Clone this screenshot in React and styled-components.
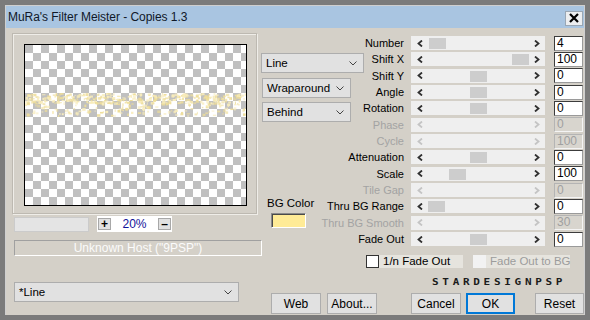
import styled, { createGlobalStyle } from 'styled-components';

const GlobalStyle = createGlobalStyle`
	html, body {
		margin: 0;
		padding: 0;
		background: #7b7b7b;
		width: 590px;
		height: 320px;
		overflow: hidden;
	}
	* {
		box-sizing: border-box;
	}
`;

const Window = styled.div`
	margin: 5px;
	width: 580px;
	height: 310px;
	border: 1px solid #cfcfcf;
	border-bottom: none;
	background: #d4d0c8;
	display: flex;
	flex-direction: column;
	font-family: 'Liberation Sans', Arial, sans-serif;
	font-size: 11px;
	color: #000;
	white-space: nowrap;
`;

const TitleBar = styled.div`
	height: 22px;
	background: #a9c5e1;
	display: flex;
	align-items: center;
	justify-content: space-between;
	padding: 0 1px 0 2px;
`;

const Title = styled.span`
	font-size: 12px;
	letter-spacing: -0.05px;
	color: #101828;
`;

const CloseButton = styled.div`
	width: 18px;
	height: 15px;
	margin-top: 2px;
	background: #eceef0;
	border: 1px solid #9aa7b4;
	display: flex;
	align-items: center;
	justify-content: center;
`;

const Body = styled.div`
	flex: 1;
	display: flex;
	padding-left: 6px;
`;

const LeftCol = styled.div`
	width: 249px;
	display: flex;
	flex-direction: column;
`;

const GroupBox = styled.div`
	margin-top: 5px;
	width: 245px;
	height: 181px;
	border: 1px solid #bdb9b1;
	box-shadow: inset 1px 1px 0 #efede8, 1px 1px 0 #efede8;
	padding: 10px 0 0 11px;
`;

const Preview = styled.div`
	width: 223px;
	height: 162px;
	border: 1px solid #000;
	background-color: #fff;
	background-image: repeating-conic-gradient(#fff 0 25%, #c0c0c0 0 50%);
	background-size: 16px 16px;
	display: flex;
	flex-direction: column;
`;

const Sparkles = styled.svg`
	margin-top: 47px;
	display: block;
`;

const ZoomRow = styled.div`
	margin: 2px 0 0 2px;
	display: flex;
	align-items: center;
	gap: 8px;
`;

const BlankField = styled.div`
	width: 75px;
	height: 15px;
	background: #e4e4e4;
	border: 1px solid #cbcbcb;
`;

const ZoomPanel = styled.div`
	width: 75px;
	height: 16px;
	background: #fff;
	display: flex;
	align-items: center;
	justify-content: space-between;
	padding: 0 1px;
`;

const ZoomButton = styled.div`
	width: 13px;
	height: 12px;
	background: #e1e1e1;
	border: 1px solid #a8a8a8;
	display: flex;
	align-items: center;
	justify-content: center;
	font-size: 12px;
	font-weight: bold;
	line-height: 1;
`;

const ZoomValue = styled.span`
	color: #12129a;
	font-size: 12px;
`;

const HostField = styled.div`
	margin: 8px 0 0 2px;
	width: 248px;
	height: 16px;
	border: 1px solid;
	border-color: #a0a0a0 #fff #fff #a0a0a0;
	color: #fbfbfb;
	font-size: 12px;
	text-align: center;
	line-height: 14px;
`;

const Combo = styled.div`
	margin: ${({ $mt }) => $mt || 0}px 0 0 ${({ $ml }) => $ml || 0}px;
	width: ${({ $w }) => $w}px;
	height: 20px;
	background: #e1e1e1;
	border: 1px solid #adadad;
	display: flex;
	align-items: center;
	justify-content: space-between;
	padding: 0 6px 0 4px;
	font-size: 11.5px;
	flex-shrink: 0;
`;

const RightCol = styled.div`
	width: 324px;
	display: flex;
	flex-direction: column;
`;

const SliderPanel = styled.div`
	margin-top: 7px;
	display: grid;
`;

const MidCol = styled.div`
	grid-area: 1 / 1;
	width: 110px;
	display: flex;
	flex-direction: column;
	align-items: flex-start;
`;

const BgLabel = styled.div`
	margin: 75px 0 0 6px;
	font-size: 11.5px;
`;

const Swatch = styled.div`
	margin: 4px 0 0 10px;
	width: 35px;
	height: 15px;
	background: #ffeb96;
	border: 1px solid;
	border-color: #8a8a8a #fff #fff #8a8a8a;
	box-shadow: inset 1px 1px 0 #4a4a4a;
`;

const SliderList = styled.div`
	grid-area: 1 / 1;
	display: flex;
	flex-direction: column;
`;

const SliderRow = styled.div`
	height: 16.33px;
	display: grid;
	grid-template-columns: 143px 134px 30px;
	column-gap: 7px;
	align-items: center;

	& > :last-child {
		margin-left: 2px;
	}
`;

const Label = styled.span`
	justify-self: end;
	font-size: 11px;
	color: ${({ $off }) => ($off ? '#a3a3a3' : '#000')};
`;

const Track = styled.div`
	position: relative;
	height: 14px;
	background: #efefef;
	display: flex;
	align-items: center;
	justify-content: space-between;
	padding: 0 5px 0 6px;
`;

const Thumb = styled.div`
	position: absolute;
	top: 2px;
	width: 17px;
	height: 11px;
	background: #cdcdcd;
`;

const ValueBox = styled.div`
	width: 29px;
	height: 15px;
	border: 1px solid;
	border-color: ${({ $off }) =>
		$off ? '#b4b4b4 #f4f4f4 #f4f4f4 #b4b4b4' : '#3c3c3c #9a9a9a #9a9a9a #3c3c3c'};
	background: ${({ $off }) => ($off ? '#d8d5ce' : '#fff')};
	color: ${({ $off }) => ($off ? '#a0a0a0' : '#000')};
	font-size: 12px;
	line-height: 13px;
	padding-left: 2px;
`;

const CheckRow = styled.div`
	margin: 8px 0 0 105px;
	display: flex;
	align-items: center;
	gap: 10px;
`;

const CheckItem = styled.div`
	display: flex;
	align-items: center;
	height: 13px;
`;

const Box = styled.div`
	width: 13px;
	height: 13px;
	background: ${({ $off }) => ($off ? '#f2f2f2' : '#fff')};
	border: 1px solid ${({ $off }) => ($off ? '#f2f2f2' : '#333')};
`;

const CheckLabel = styled.div`
	width: ${({ $w }) => $w}px;
	height: 13px;
	background: #e6e4de;
	padding-left: 4px;
	font-size: 11.5px;
	line-height: 13px;
	color: ${({ $off }) => ($off ? '#9c9c9c' : '#000')};
`;

const Logo = styled.div`
	margin: 12px 0 0 171px;
	height: 8px;
	font-family: 'DejaVu Sans Mono', monospace;
	font-weight: bold;
	font-size: 11px;
	line-height: 8px;
	letter-spacing: 3.7px;
	color: #1c1c1c;
	transform: scaleY(0.75);
	transform-origin: top left;
`;

const ButtonRow = styled.div`
	margin: 5px 0 0 10px;
	display: flex;
`;

const Button = styled.div`
	margin-left: ${({ $ml }) => $ml || 0}px;
	width: ${({ $w }) => $w || 50}px;
	height: 21px;
	background: #e1e1e1;
	border: ${({ $default }) => ($default ? '2px solid #0078d7' : '1px solid #adadad')};
	display: flex;
	align-items: center;
	justify-content: center;
	font-size: 12px;
`;

function Chevron({ dir = 'down', off }) {
	const color = off ? '#c4c4c4' : '#303030';
	if (dir === 'down')
		return (
			<svg width='8' height='5' viewBox='0 0 8 5'>
				<polyline points='0.5,0.5 4,4 7.5,0.5' fill='none' stroke='#444' strokeWidth='1' />
			</svg>
		);
	const pts = dir === 'left' ? '5,0.5 1.5,3.5 5,6.5' : '1,0.5 4.5,3.5 1,6.5';
	return (
		<svg width='6' height='7' viewBox='0 0 6 7'>
			<polyline points={pts} fill='none' stroke={color} strokeWidth='1.8' />
		</svg>
	);
}

function makeSparkles() {
	let s = 11;
	const rnd = () => {
		s = (s * 9301 + 49297) % 233280;
		return s / 233280;
	};
	const dots = [];
	for (let c = 0; c < 4; c++) {
		const ox = c * 56;
		for (let i = 0; i < 130; i++) {
			const dense = i < 95;
			dots.push({
				x: ox + rnd() * 54,
				y: dense ? 1 + rnd() * 10 : 10 + rnd() * 13,
				w: 1 + rnd() * 2.5,
				h: 1 + rnd() * 2,
				o: 0.5 + rnd() * 0.5,
				c: rnd() > 0.5 ? '#eedd98' : '#f8ecbb',
			});
		}
	}
	return dots;
}

const sparkles = makeSparkles();

const sliders = [
	{ label: 'Number', value: '4', thumb: 18 },
	{ label: 'Shift X', value: '100', thumb: 101 },
	{ label: 'Shift Y', value: '0', thumb: 59 },
	{ label: 'Angle', value: '0', thumb: 59 },
	{ label: 'Rotation', value: '0', thumb: 59 },
	{ label: 'Phase', value: '0', off: true },
	{ label: 'Cycle', value: '100', off: true },
	{ label: 'Attenuation', value: '0', thumb: 59 },
	{ label: 'Scale', value: '100', thumb: 38 },
	{ label: 'Tile Gap', value: '0', off: true },
	{ label: 'Thru BG Range', value: '0', thumb: 17 },
	{ label: 'Thru BG Smooth', value: '30', off: true },
	{ label: 'Fade Out', value: '0', thumb: 59 },
];

function App() {
	return (
		<>
			<GlobalStyle />
			<Window>
				<TitleBar>
					<Title>MuRa's Filter Meister - Copies 1.3</Title>
					<CloseButton>
						<svg width='10' height='10' viewBox='0 0 10 10'>
							<path d='M1 1 L9 9 M9 1 L1 9' stroke='#000' strokeWidth='2.2' />
						</svg>
					</CloseButton>
				</TitleBar>
				<Body>
					<LeftCol>
						<GroupBox>
							<Preview>
								<Sparkles width='221' height='25' viewBox='0 0 221 25'>
									{sparkles.map((d, i) => (
										<rect key={i} x={d.x} y={d.y} width={d.w} height={d.h} fill={d.c} opacity={d.o} />
									))}
								</Sparkles>
							</Preview>
						</GroupBox>
						<ZoomRow>
							<BlankField />
							<ZoomPanel>
								<ZoomButton>+</ZoomButton>
								<ZoomValue>20%</ZoomValue>
								<ZoomButton>–</ZoomButton>
							</ZoomPanel>
						</ZoomRow>
						<HostField>Unknown Host ("9PSP")</HostField>
						<Combo $w={225} $mt={26} $ml={2}>
							<span>*Line</span>
							<Chevron />
						</Combo>
					</LeftCol>
					<RightCol>
						<SliderPanel>
							<MidCol>
								<Combo $w={103} $mt={18}>
									<span>Line</span>
									<Chevron />
								</Combo>
								<Combo $w={89} $mt={5} $ml={1}>
									<span>Wraparound</span>
									<Chevron />
								</Combo>
								<Combo $w={89} $mt={4} $ml={1}>
									<span>Behind</span>
									<Chevron />
								</Combo>
								<BgLabel>BG Color</BgLabel>
								<Swatch />
							</MidCol>
							<SliderList>
								{sliders.map(s => (
									<SliderRow key={s.label}>
										<Label $off={s.off}>{s.label}</Label>
										<Track>
											<Chevron dir='left' off={s.off} />
											{!s.off && <Thumb style={{ left: s.thumb }} />}
											<Chevron dir='right' off={s.off} />
										</Track>
										<ValueBox $off={s.off}>{s.value}</ValueBox>
									</SliderRow>
								))}
							</SliderList>
						</SliderPanel>
						<CheckRow>
							<CheckItem>
								<Box />
								<CheckLabel $w={84}>1/n Fade Out</CheckLabel>
							</CheckItem>
							<CheckItem>
								<Box $off />
								<CheckLabel $w={84} $off>
									Fade Out to BG
								</CheckLabel>
							</CheckItem>
						</CheckRow>
						<Logo>STARDESIGNPSP</Logo>
						<ButtonRow>
							<Button>Web</Button>
							<Button $ml={6}>About...</Button>
							<Button $ml={34}>Cancel</Button>
							<Button $ml={5} $w={49} $default>
								OK
							</Button>
							<Button $ml={20} $w={49}>
								Reset
							</Button>
						</ButtonRow>
					</RightCol>
				</Body>
			</Window>
		</>
	);
}

export default App;
